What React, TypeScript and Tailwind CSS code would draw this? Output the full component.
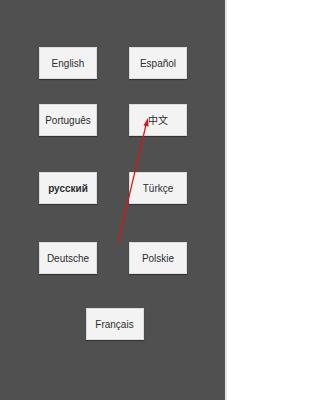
const languages: string[][] = [
  ["English", "Español"],
  ["Português", "中文"],
  ["русский", "Türkçe"],
  ["Deutsche", "Polskie"],
];

// vertical gap before each row, in px
const rowGaps = ["mt-[47px]", "mt-[25px]", "mt-[36px]", "mt-[38px]"];

const LangButton = ({ label }: { label: string }) => (
  <button
    type="button"
    className="w-[58px] h-[32px] bg-[#f3f3f3] flex items-center justify-center text-[10px] text-[#2e2e2e] shadow-[0_1px_1px_rgba(0,0,0,0.35)] border border-[#dcdcdc]"
    style={{ fontFamily: '"Liberation Sans", "Noto Sans CJK SC", sans-serif' }}
  >
    <span className={label === "русский" ? "font-bold" : ""}>{label}</span>
  </button>
);

export default function App() {
  return (
    <div className="w-[227px] h-[400px] flex bg-[#e6e6e6]">
      <div className="relative w-[225px] h-[400px] bg-[#505050] flex flex-col items-center">
        {languages.map((row, i) => (
          <div key={i} className={`flex gap-[32px] pl-[1px] ${rowGaps[i]}`}>
            {row.map((label) => (
              <LangButton key={label} label={label} />
            ))}
          </div>
        ))}

        <div className="mt-[34px] ml-[4px]">
          <LangButton label="Français" />
        </div>

        {/* red pointer drawn over the buttons */}
        <svg
          className="absolute left-0 top-0 pointer-events-none"
          width="225"
          height="400"
          viewBox="0 0 225 400"
        >
          <line x1="118" y1="243" x2="146" y2="125" stroke="#e01010" strokeWidth="1.2" />
          <polygon points="148,118 143.5,125.5 148.5,126.5" fill="#e01010" />
        </svg>
      </div>
    </div>
  );
}
